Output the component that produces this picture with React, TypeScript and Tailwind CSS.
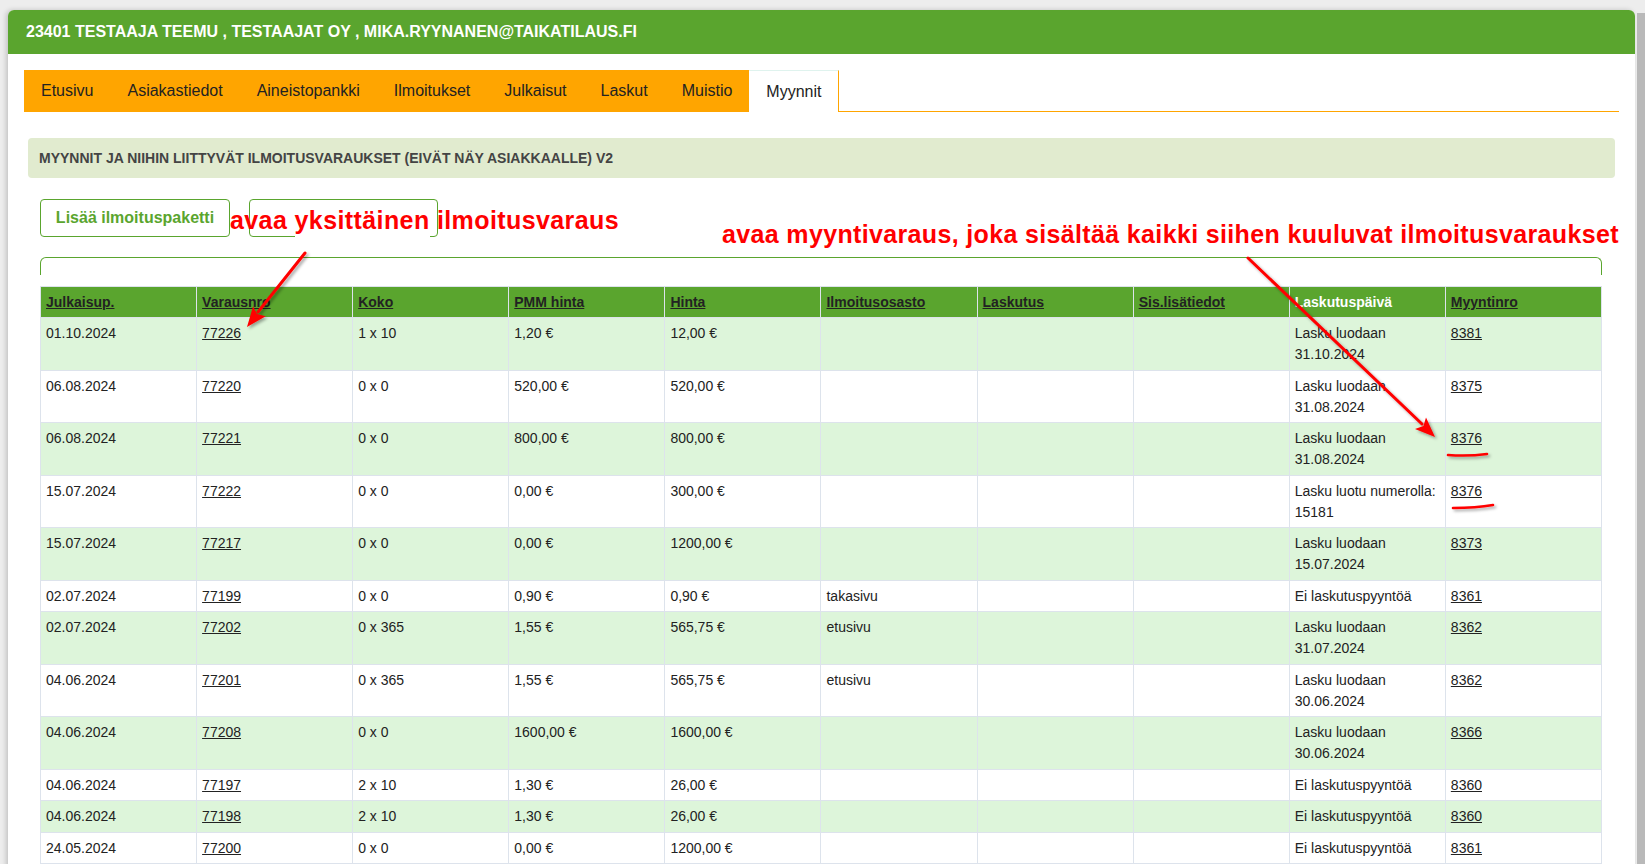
import React from 'react';

const tabs = ['Etusivu', 'Asiakastiedot', 'Aineistopankki', 'Ilmoitukset', 'Julkaisut', 'Laskut', 'Muistio'];

const headers = [
  { label: 'Julkaisup.', link: true },
  { label: 'Varausnro', link: true },
  { label: 'Koko', link: true },
  { label: 'PMM hinta', link: true },
  { label: 'Hinta', link: true },
  { label: 'Ilmoitusosasto', link: true },
  { label: 'Laskutus', link: true },
  { label: 'Sis.lisätiedot', link: true },
  { label: 'Laskutuspäivä', link: false },
  { label: 'Myyntinro', link: true },
];

type Row = {
  date: string;
  nro: string;
  koko: string;
  pmm: string;
  hinta: string;
  osasto: string;
  billing: string[];
  myynti: string;
};

const rows: Row[] = [
  { date: '01.10.2024', nro: '77226', koko: '1 x 10', pmm: '1,20 €', hinta: '12,00 €', osasto: '', billing: ['Lasku luodaan', '31.10.2024'], myynti: '8381' },
  { date: '06.08.2024', nro: '77220', koko: '0 x 0', pmm: '520,00 €', hinta: '520,00 €', osasto: '', billing: ['Lasku luodaan', '31.08.2024'], myynti: '8375' },
  { date: '06.08.2024', nro: '77221', koko: '0 x 0', pmm: '800,00 €', hinta: '800,00 €', osasto: '', billing: ['Lasku luodaan', '31.08.2024'], myynti: '8376' },
  { date: '15.07.2024', nro: '77222', koko: '0 x 0', pmm: '0,00 €', hinta: '300,00 €', osasto: '', billing: ['Lasku luotu numerolla:', '15181'], myynti: '8376' },
  { date: '15.07.2024', nro: '77217', koko: '0 x 0', pmm: '0,00 €', hinta: '1200,00 €', osasto: '', billing: ['Lasku luodaan', '15.07.2024'], myynti: '8373' },
  { date: '02.07.2024', nro: '77199', koko: '0 x 0', pmm: '0,90 €', hinta: '0,90 €', osasto: 'takasivu', billing: ['Ei laskutuspyyntöä'], myynti: '8361' },
  { date: '02.07.2024', nro: '77202', koko: '0 x 365', pmm: '1,55 €', hinta: '565,75 €', osasto: 'etusivu', billing: ['Lasku luodaan', '31.07.2024'], myynti: '8362' },
  { date: '04.06.2024', nro: '77201', koko: '0 x 365', pmm: '1,55 €', hinta: '565,75 €', osasto: 'etusivu', billing: ['Lasku luodaan', '30.06.2024'], myynti: '8362' },
  { date: '04.06.2024', nro: '77208', koko: '0 x 0', pmm: '1600,00 €', hinta: '1600,00 €', osasto: '', billing: ['Lasku luodaan', '30.06.2024'], myynti: '8366' },
  { date: '04.06.2024', nro: '77197', koko: '2 x 10', pmm: '1,30 €', hinta: '26,00 €', osasto: '', billing: ['Ei laskutuspyyntöä'], myynti: '8360' },
  { date: '04.06.2024', nro: '77198', koko: '2 x 10', pmm: '1,30 €', hinta: '26,00 €', osasto: '', billing: ['Ei laskutuspyyntöä'], myynti: '8360' },
  { date: '24.05.2024', nro: '77200', koko: '0 x 0', pmm: '0,00 €', hinta: '1200,00 €', osasto: '', billing: ['Ei laskutuspyyntöä'], myynti: '8361' },
];

const td = 'border border-[#dde3ec] px-[5px] pt-[5px] pb-[4.5px] align-top leading-[21px]';

// punaiset merkinnät kuvakaappauksen päällä
function Annotations() {
  return (
    <>
      <div className="absolute left-[230px] top-[204px] whitespace-nowrap text-[25px] font-bold leading-[32px] tracking-[0.4px] text-[#ff0000]">
        <span>avaa </span>
        <span className="inline-block bg-white pb-[3px]">yksittäinen</span>
        <span> ilmoitusvaraus</span>
      </div>
      <div className="absolute left-[722px] top-[218px] whitespace-nowrap text-[25px] font-bold leading-[32px] tracking-[0.35px] text-[#ff0000]">
        avaa myyntivaraus, joka sisältää kaikki siihen kuuluvat ilmoitusvaraukset
      </div>
      <svg className="pointer-events-none absolute left-0 top-0" width="1645" height="864" viewBox="0 0 1645 864">
        <defs>
          <filter id="sh" x="-20%" y="-20%" width="140%" height="140%">
            <feDropShadow dx="2" dy="2" stdDeviation="1.5" floodColor="#000" floodOpacity="0.35" />
          </filter>
        </defs>
        <g filter="url(#sh)" fill="#ff0000" stroke="#ff0000" strokeLinecap="round">
          <line x1="305" y1="253" x2="258" y2="312" strokeWidth="3" />
          <polygon points="247,327 265.7,316.3 257,314 253.1,306.3" stroke="none" />
          <line x1="1248" y1="258" x2="1422" y2="424" strokeWidth="3" />
          <polygon points="1435,437 1415,429 1423.4,426 1426,417.4" stroke="none" />
          <path d="M1448 455 Q1468 456.5 1487 454" fill="none" strokeWidth="2.6" />
          <path d="M1453 508 Q1476 508 1493 505" fill="none" strokeWidth="2.6" />
        </g>
      </svg>
    </>
  );
}

export default function App() {
  return (
    <div className="relative flex min-h-screen bg-[#ededed] pl-[8px] pt-[10px] font-['Liberation_Sans',Arial,sans-serif] text-[#222]">
      <div className="w-[1627px] rounded-t-[6px] bg-white pb-[40px] shadow-[-2px_0_5px_rgba(0,0,0,0.18)]">
        <div className="flex h-[44px] items-center rounded-t-[6px] bg-[#5aa52e] px-[18px] text-[16px] font-bold text-white">
          23401 TESTAAJA TEEMU , TESTAAJAT OY , MIKA.RYYNANEN@TAIKATILAUS.FI
        </div>

        <div className="px-[16px] pt-[16px]">
          {/* välilehdet */}
          <div className="flex h-[42px] text-[16px]">
            {tabs.map((t) => (
              <div key={t} className="flex items-center bg-[#ffa500] px-[17px] text-[#222]">
                {t}
              </div>
            ))}
            <div className="flex items-center border-r border-t border-r-[#ffa500] border-t-[#dff3ee] bg-white px-[17px] text-[#222]">
              Myynnit
            </div>
            <div className="flex-1 border-b border-[#ffa500]" />
          </div>

          <div className="mx-[4px] mt-[26px] flex h-[40px] items-center rounded-[4px] bg-[#e1ebcf] pl-[11px] text-[14px] font-bold text-[#444]">
            MYYNNIT JA NIIHIN LIITTYVÄT ILMOITUSVARAUKSET (EIVÄT NÄY ASIAKKAALLE) V2
          </div>

          <div className="ml-[16px] mt-[21px] flex gap-[19px]">
            <button className="flex h-[38px] w-[190px] items-center justify-center rounded-[4px] border border-[#5aa52e] bg-white text-[16px] font-bold text-[#5aa52e]">
              Lisää ilmoituspaketti
            </button>
            <button className="h-[38px] w-[189px] rounded-[4px] border border-[#5aa52e] bg-white" />
          </div>

          <div className="ml-[16px] mt-[20px] h-[18px] w-[1562px] rounded-t-[6px] border-l border-r border-t border-[#5aa52e]" />

          <table className="ml-[16px] mt-[11px] w-[1562px] table-fixed border-collapse text-[14px]">
            <thead>
              <tr className="bg-[#5aa52e]">
                {headers.map((h) => (
                  <th
                    key={h.label}
                    className={`border border-[#dde3ec] px-[5px] pt-[5px] pb-[4px] text-left font-bold leading-[21px] ${
                      h.link ? 'text-[#222] underline' : 'text-white'
                    }`}
                  >
                    {h.label}
                  </th>
                ))}
              </tr>
            </thead>
            <tbody>
              {rows.map((r, i) => (
                <tr key={r.nro} className={i % 2 === 0 ? 'bg-[#ddf5da]' : 'bg-white'}>
                  <td className={td}>{r.date}</td>
                  <td className={td}>
                    <a className="underline">{r.nro}</a>
                  </td>
                  <td className={td}>{r.koko}</td>
                  <td className={td}>{r.pmm}</td>
                  <td className={td}>{r.hinta}</td>
                  <td className={td}>{r.osasto}</td>
                  <td className={td}></td>
                  <td className={td}></td>
                  <td className={td}>
                    {r.billing.map((b) => (
                      <div key={b}>{b}</div>
                    ))}
                  </td>
                  <td className={td}>
                    <a className="underline">{r.myynti}</a>
                  </td>
                </tr>
              ))}
            </tbody>
          </table>
        </div>
      </div>
      <div className="ml-[2px] mt-[3px] w-[8px] bg-[#b9b9b9]" />
      <Annotations />
    </div>
  );
}
